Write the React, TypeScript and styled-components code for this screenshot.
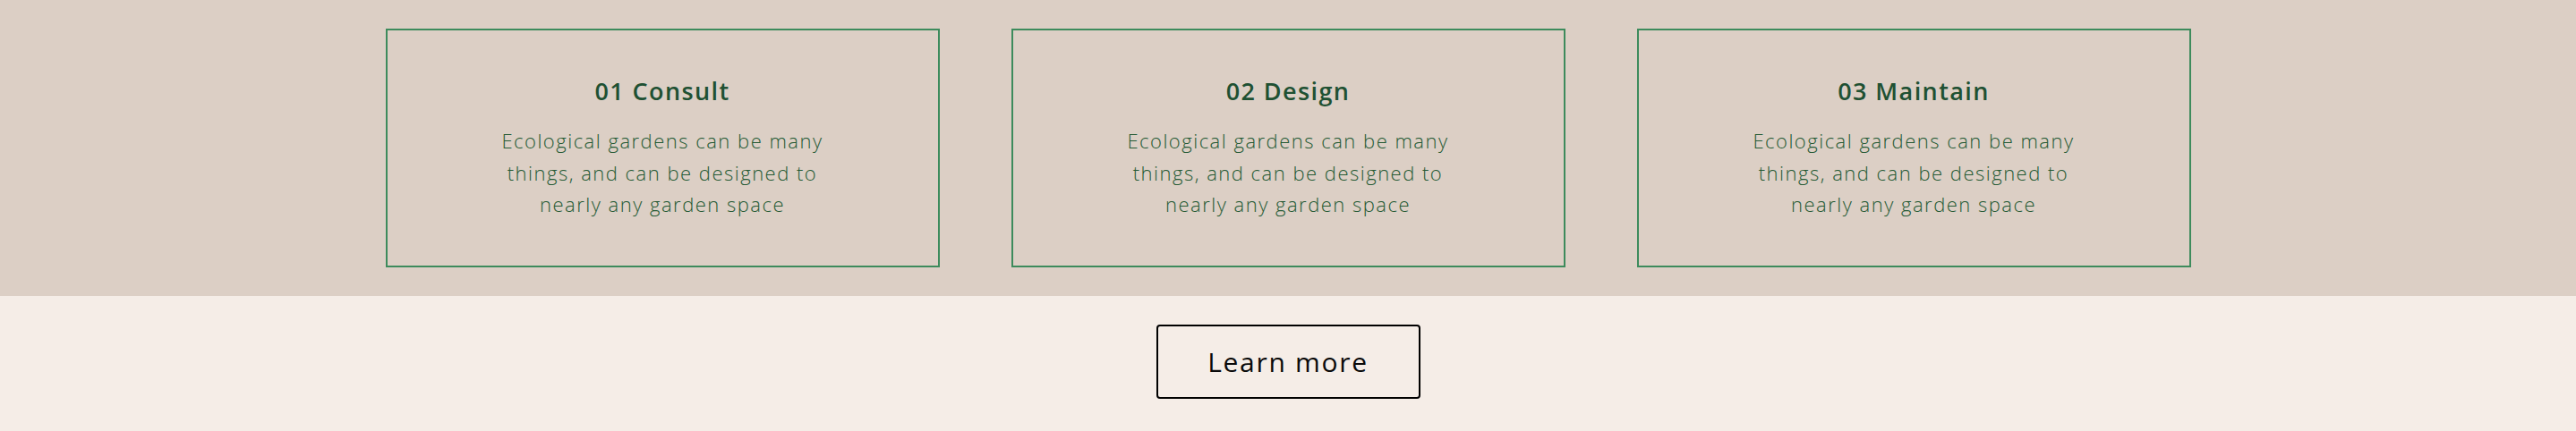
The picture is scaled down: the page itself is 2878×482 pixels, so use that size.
import React from "react";
import styled, { createGlobalStyle } from "styled-components";

const GlobalStyle = createGlobalStyle`
  html, body {
    margin: 0;
    padding: 0;
    background: #f5ede7;
  }
  * { box-sizing: border-box; }
`;

const Page = styled.div`
  width: 100%;
  font-family: "Open Sans", "Liberation Sans", sans-serif;
`;

const StepsSection = styled.section`
  background: #dccfc5;
  padding: 32px 0;
  display: flex;
  justify-content: center;
`;

const StepsGrid = styled.div`
  width: 2017px;
  display: grid;
  grid-template-columns: repeat(3, 1fr);
  column-gap: 80px;
`;

const Card = styled.div`
  border: 2px solid #3d8b5c;
  padding: 50px 20px;
  display: flex;
  flex-direction: column;
  align-items: center;
  text-align: center;
`;

const CardTitle = styled.h3`
  margin: 0;
  font-size: 27px;
  line-height: 36px;
  font-weight: 600;
  color: #1f5133;
  letter-spacing: 1.4px;
`;

const CardText = styled.p`
  margin: 20px 0 0;
  width: 420px;
  font-size: 22px;
  line-height: 35.5px;
  font-weight: 300;
  color: #255a34;
  letter-spacing: 1.5px;
`;

const ActionSection = styled.section`
  background: #f5ede7;
  padding: 32px 0 37px;
  display: flex;
  justify-content: center;
`;

const OutlineButton = styled.button`
  width: 295px;
  height: 83px;
  border: 2px solid #000;
  border-radius: 4px;
  background: transparent;
  color: #0a0a0a;
  font-family: "Open Sans", "Liberation Sans", sans-serif;
  font-size: 30px;
  font-weight: 400;
  letter-spacing: 1.7px;
  cursor: pointer;
  display: flex;
  align-items: center;
  justify-content: center;
  padding: 0;
`;

const steps = [
  { id: "01", name: "Consult" },
  { id: "02", name: "Design" },
  { id: "03", name: "Maintain" },
];

export default function App() {
  return (
    <Page>
      <GlobalStyle />
      <StepsSection>
        <StepsGrid>
          {steps.map((s) => (
            <Card key={s.id}>
              <CardTitle>
                {s.id} {s.name}
              </CardTitle>
              <CardText>
                Ecological gardens can be many things, and can be designed to
                nearly any garden space
              </CardText>
            </Card>
          ))}
        </StepsGrid>
      </StepsSection>
      <ActionSection>
        <OutlineButton>Learn more</OutlineButton>
      </ActionSection>
    </Page>
  );
}
